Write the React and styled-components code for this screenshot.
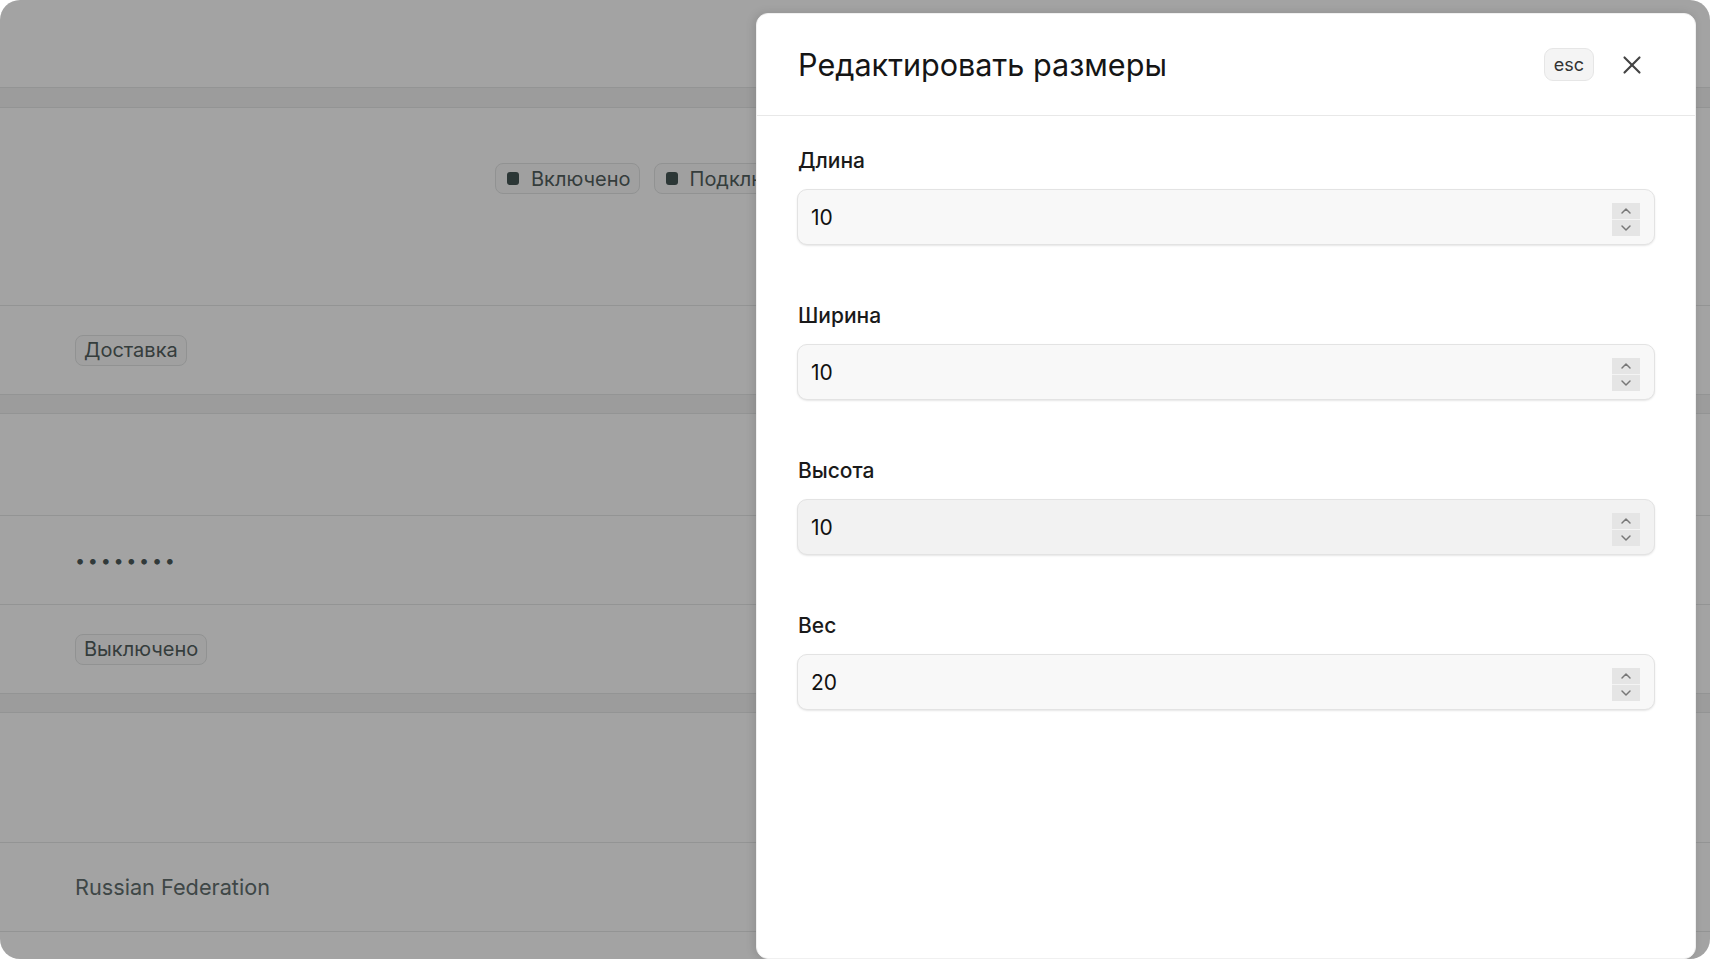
import React from "react";
import styled, { createGlobalStyle } from "styled-components";
import { ChevronUp, ChevronDown, X } from "lucide-react";

const GlobalStyle = createGlobalStyle`
  html, body {
    margin: 0;
    padding: 0;
    background: #ffffff;
  }
  body {
    font-family: Inter, "Noto Sans", "Liberation Sans", sans-serif;
    -webkit-font-smoothing: antialiased;
  }
  * { box-sizing: border-box; }
`;

// окно приложения
const Window = styled.div`
  position: relative;
  width: 1710px;
  height: 959px;
  border-radius: 20px;
  overflow: hidden;
  background: #fafafa;
`;

// страница под оверлеем
const Page = styled.div`
  display: flex;
  flex-direction: column;
  width: 100%;
`;

const Row = styled.div`
  height: ${(p) => p.$h}px;
  display: flex;
  align-items: ${(p) => (p.$top ? "flex-start" : "center")};
  gap: 14px;
  padding-left: ${(p) => p.$indent || 75}px;
  padding-top: ${(p) => p.$top || 0}px;
  background: #ffffff;
  border-bottom: 1px solid #e6e8e8;
`;

const Band = styled.div`
  height: ${(p) => p.$h || 19}px;
  background: #f4f4f4;
  border-bottom: 1px solid #e6e8e8;
`;

const Chip = styled.span`
  display: inline-flex;
  align-items: center;
  gap: 12px;
  height: 31px;
  padding: 0 8px 0 ${(p) => (p.$dot ? 11 : 8)}px;
  border: 1px solid #e3e5e5;
  border-radius: 8px;
  background: #fbfbfb;
  color: #53605f;
  font-size: 20px;
  white-space: nowrap;
`;

const Dot = styled.i`
  width: 12px;
  height: 13px;
  border-radius: 3px;
  background: #465655;
`;

const PlainText = styled.span`
  font-size: 21.7px;
  font-weight: 400;
  color: #637070;
`;

const Secret = styled.span`
  font-size: 18px;
  letter-spacing: 2.7px;
  color: #4d5b5b;
`;

const Overlay = styled.div`
  position: absolute;
  inset: 0;
  background: rgba(0, 0, 0, 0.36);
`;

// боковая панель
const Drawer = styled.aside`
  position: absolute;
  top: 13px;
  right: 14px;
  bottom: 0;
  width: 940px;
  background: #ffffff;
  border: 1px solid #f0f0f0;
  border-radius: 12px;
  box-shadow: -2px 0 10px rgba(0, 0, 0, 0.12);
  display: flex;
  flex-direction: column;
`;

const Header = styled.header`
  height: 102px;
  display: flex;
  align-items: center;
  padding: 0 47px 0 41px;
  border-bottom: 1px solid #e8e8e8;
`;

const Title = styled.h2`
  flex: 1;
  margin: 0;
  font-size: 30.6px;
  font-weight: 400;
  color: #151515;
`;

const Kbd = styled.kbd`
  display: inline-flex;
  align-items: center;
  justify-content: center;
  width: 50px;
  height: 33px;
  border: 1px solid #e6e6e6;
  border-radius: 9px;
  background: #f4f4f4;
  font-family: Inter, "Liberation Sans", sans-serif;
  font-size: 18px;
  color: #333;
`;

const CloseButton = styled.button`
  display: flex;
  align-items: center;
  justify-content: center;
  width: 32px;
  height: 32px;
  margin-left: 22px;
  padding: 0;
  border: none;
  background: transparent;
  color: #444;
  cursor: pointer;
`;

const Body = styled.div`
  display: flex;
  flex-direction: column;
  gap: 57px;
  padding: 31px 40px 0 40px;
`;

const Field = styled.div`
  display: flex;
  flex-direction: column;
  gap: 14px;
`;

const Label = styled.label`
  font-size: 21px;
  line-height: 28px;
  font-weight: 500;
  color: #1a1a1a;
  padding-left: 1px;
`;

const InputBox = styled.div`
  height: 56px;
  display: flex;
  align-items: center;
  padding: 0 14px 0 13px;
  border: 1px solid #e3e3e3;
  border-radius: 10px;
  background: ${(p) => (p.$hover ? "#f2f2f2" : "#f8f8f8")};
  box-shadow: 0 1px 2px rgba(0, 0, 0, 0.1);
`;

const Input = styled.input`
  flex: 1;
  min-width: 0;
  border: none;
  outline: none;
  background: transparent;
  font-family: Inter, "Liberation Sans", sans-serif;
  font-size: 21px;
  color: #111;
  padding: 0;
  -moz-appearance: textfield;
  &::-webkit-inner-spin-button,
  &::-webkit-outer-spin-button {
    -webkit-appearance: none;
    margin: 0;
  }
`;

const Spinner = styled.div`
  display: flex;
  flex-direction: column;
  gap: 1px;
  width: 28px;
  height: 29px;
  background: #f4f4f4;
`;

const SpinHalf = styled.span`
  flex: 1;
  display: flex;
  align-items: center;
  justify-content: center;
  background: #e5e5e5;
  color: #777;
`;

const fields = [
  { label: "Длина", value: 10 },
  { label: "Ширина", value: 10 },
  { label: "Высота", value: 10, hover: true },
  { label: "Вес", value: 20 },
];

const App = () => {
  return (
    <Window>
      <GlobalStyle />
      <Page>
        <Row $h={88} />
        <Band $h={20} />
        <Row $h={198} $top={55} $indent={495}>
          <Chip $dot>
            <Dot />
            Включено
          </Chip>
          <Chip $dot>
            <Dot />
            Подключено
          </Chip>
        </Row>
        <Row $h={89}>
          <Chip>Доставка</Chip>
        </Row>
        <Band />
        <Row $h={102} />
        <Row $h={89}>
          <Secret>••••••••</Secret>
        </Row>
        <Row $h={89}>
          <Chip>Выключено</Chip>
        </Row>
        <Band />
        <Row $h={130} />
        <Row $h={89}>
          <PlainText>Russian Federation</PlainText>
        </Row>
        <Row $h={60} />
      </Page>

      <Overlay />

      <Drawer>
        <Header>
          <Title>Редактировать размеры</Title>
          <Kbd>esc</Kbd>
          <CloseButton aria-label="Закрыть">
            <X size={30} strokeWidth={1.7} />
          </CloseButton>
        </Header>
        <Body>
          {fields.map((f) => (
            <Field key={f.label}>
              <Label>{f.label}</Label>
              <InputBox $hover={f.hover}>
                <Input type="number" defaultValue={f.value} />
                <Spinner>
                  <SpinHalf>
                    <ChevronUp size={16} strokeWidth={2.2} />
                  </SpinHalf>
                  <SpinHalf>
                    <ChevronDown size={16} strokeWidth={2.2} />
                  </SpinHalf>
                </Spinner>
              </InputBox>
            </Field>
          ))}
        </Body>
      </Drawer>
    </Window>
  );
};

export default App;
